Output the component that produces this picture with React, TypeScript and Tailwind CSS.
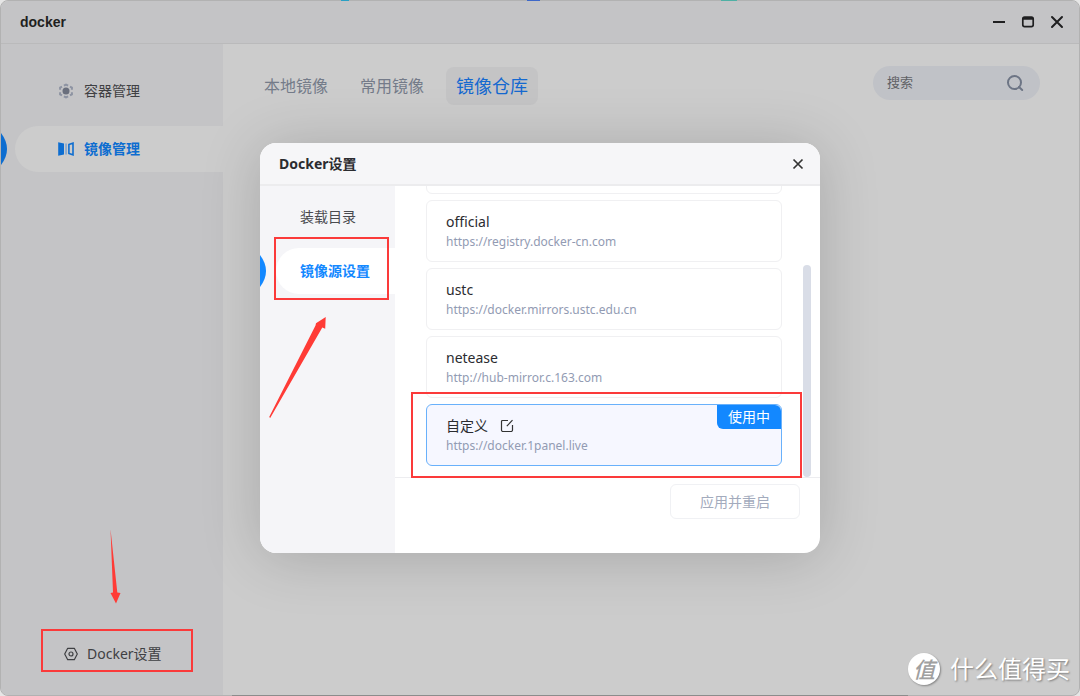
import React from "react";

type Mirror = { name: string; url: string; active?: boolean };

const mirrors: Mirror[] = [
  { name: "official", url: "https://registry.docker-cn.com" },
  { name: "ustc", url: "https://docker.mirrors.ustc.edu.cn" },
  { name: "netease", url: "http://hub-mirror.c.163.com" },
  { name: "自定义", url: "https://docker.1panel.live", active: true },
];

function ActiveMark({ className }: { className: string }) {
  return (
    <svg viewBox="0 0 6 32" className={`absolute left-0 h-8 w-1.5 ${className}`} aria-hidden="true">
      <path d="M0 0Q12 16 0 32Z" fill="currentColor" />
    </svg>
  );
}

function ContainerIcon() {
  return (
    <svg viewBox="0 0 16 16" className="size-4" fill="none" aria-hidden="true">
      <circle cx="8" cy="8" r="3.5" fill="#6a6f7d" />
      <path
        d="M5.9 2.7 8 1.6l2.1 1.1M12 3.6l1.900 1.100v2.100M13.900 9.200v2.100L12 12.400M10.100 13.300 8 14.400l-2.100-1.100M4 12.400l-1.900-1.100V9.200M2.100 6.800V4.700L4 3.600"
        stroke="#8d93a2"
        strokeWidth="2"
      />
    </svg>
  );
}

function ImageIcon() {
  return (
    <svg viewBox="0 0 16 16" className="size-4" fill="none" aria-hidden="true">
      <path d="M.2 1.200 6 2.600v10.800L.2 14.800Z" fill="#0d6dd0" />
      <path d="M7.300 2.400h1.500v11.200H7.300z" fill="#7da3cf" />
      <path d="M10.900 3.500 15 2.200v11.600l-4.100-1.300Z" stroke="#0d6dd0" strokeWidth="1.600" />
    </svg>
  );
}

function SettingsIcon() {
  return (
    <svg viewBox="0 0 16 16" className="size-4" fill="none" stroke="#3f4043" strokeWidth="1.200" aria-hidden="true">
      <path d="M4.700 2.300h6.600L14.300 8l-3 5.700H4.700L1.700 8Z" strokeLinejoin="round" />
      <circle cx="8" cy="8" r="2" />
    </svg>
  );
}

function MirrorCard({ name, url, active }: Mirror) {
  return (
    <li
      className={
        active
          ? "relative flex h-[62px] shrink-0 flex-col justify-center rounded-md border border-[#69b1fb] bg-[#f6f7ff] px-[19px] pt-0.5"
          : "relative flex h-[62px] shrink-0 flex-col justify-center rounded-md border border-[#f0f0f2] bg-white px-[19px] pt-0.5"
      }
    >
      <div className="flex items-center gap-3 text-sm leading-5 text-[#2b2c30]">
        {name}
        {active && (
          <button type="button" aria-label="编辑">
            <svg viewBox="0 0 14 14" className="size-3.5" fill="none" stroke="#333" strokeWidth="1.200" aria-hidden="true">
              <path d="M8 1.500H2.500a1 1 0 0 0-1 1v8.500A1.500 1.500 0 0 0 3 12.500h8a1.500 1.500 0 0 0 1.500-1.500V6M6.800 7.200l5.700-6" />
            </svg>
          </button>
        )}
      </div>
      <div className="text-xs leading-5 text-[#929bb3]">{url}</div>
      {active && (
        <span className="absolute top-0 right-0 flex h-6 w-16 items-center justify-center rounded-tr-md rounded-bl-md bg-[#1388ff] text-sm text-white">
          使用中
        </span>
      )}
    </li>
  );
}

function SettingsDialog() {
  return (
    <section
      role="dialog"
      aria-label="Docker设置"
      className="relative flex min-h-[410px] w-[560px] max-w-full flex-col rounded-2xl bg-white shadow-[0_4px_60px_rgba(0,0,0,0.18)]"
    >
      <header className="flex h-[43px] items-center justify-between rounded-t-2xl border-b-2 border-[#ececee] bg-[#f6f6f8] pr-4 pl-[19px]">
        <h2 className="text-sm font-bold text-[#2b2c30]">Docker设置</h2>
        <button type="button" aria-label="关闭">
          <svg viewBox="0 0 12 12" className="size-3" stroke="#333" strokeWidth="1.700" aria-hidden="true">
            <path d="M1.500 1.500l9 9M10.500 1.500l-9 9" />
          </svg>
        </button>
      </header>
      <div className="flex flex-1">
        <nav className="relative flex w-[135px] flex-col gap-2 rounded-bl-2xl bg-[#f5f5f8] pt-2 pl-4 text-sm">
          <button type="button" className="h-[46px] pl-6 text-left text-[#4a4b50]">
            装载目录
          </button>
          <button type="button" className="h-[46px] rounded-l-full bg-white pl-6 text-left font-bold text-[#1388ff]">
            镜像源设置
          </button>
          <ActiveMark className="top-[69px] text-[#1388ff]" />
        </nav>
        <div className="flex min-w-0 flex-1 flex-col">
          <div className="relative h-[292px] border-b border-[#ededf0]">
            <ul className="flex h-full flex-col justify-end gap-1.5 overflow-hidden pr-[38px] pb-[11px] pl-[31px]">
              <li className="h-[62px] shrink-0 rounded-md border border-[#f0f0f2]" />
              {mirrors.map((m) => (
                <MirrorCard key={m.name} {...m} />
              ))}
            </ul>
            <span className="absolute right-[9px] bottom-0 h-[212px] w-2 rounded-full bg-[#d9dde7]" />
          </div>
          <footer className="flex justify-end pt-1.5 pr-5">
            <button type="button" className="h-[35px] w-[130px] rounded-md border border-[#f0f1f4] text-sm text-[#a3abbd]">
              应用并重启
            </button>
          </footer>
        </div>
      </div>

      <div className="pointer-events-none absolute top-[94px] left-[14px] h-[63px] w-[115px] border-2 border-[#fb3a3a]" />
      <div className="pointer-events-none absolute top-[249px] left-[151px] h-[86px] w-[391px] border-2 border-[#fb3a3a]" />
      <svg viewBox="0 0 60 104" className="pointer-events-none absolute top-[173px] left-[8px] h-[104px] w-[60px]" aria-hidden="true">
        <path d="M1.200 101 47.500 9.500 48 7.200 57.700 1 57.200 12.800 54.300 11.500 2.200 102Z" fill="#ff3b36" />
      </svg>
    </section>
  );
}

export default function App() {
  return (
    <div className="relative flex h-screen flex-col overflow-hidden bg-[#e6e6e6] font-['Noto_Sans','Noto_Sans_CJK_SC',sans-serif]">
      <div className="flex flex-1 flex-col overflow-hidden rounded-lg border border-[#b2b2b2] bg-[#cccccc]">
        <header className="flex h-[43px] shrink-0 items-center justify-between border-b border-[#bababb] bg-[#c4c4c6] pr-[15px] pl-[19px]">
          <h1 className="font-['Liberation_Sans','Noto_Sans_CJK_SC',sans-serif] text-sm font-bold text-[#1f1f20]">docker</h1>
          <div className="flex gap-[15px]">
            <button type="button" aria-label="最小化">
              <svg viewBox="0 0 14 14" className="size-3.5" stroke="#1f1f20" strokeWidth="2" aria-hidden="true">
                <path d="M1 7h12" />
              </svg>
            </button>
            <button type="button" aria-label="最大化">
              <svg viewBox="0 0 14 14" className="size-3.5" fill="none" stroke="#1f1f20" aria-hidden="true">
                <rect x="1.800" y="2" width="10.400" height="9.600" rx="1.800" strokeWidth="1.700" />
                <path d="M2 3.400h10" strokeWidth="2.600" />
              </svg>
            </button>
            <button type="button" aria-label="关闭">
              <svg viewBox="0 0 14 14" className="size-3.5" stroke="#1f1f20" strokeWidth="2" strokeLinecap="round" aria-hidden="true">
                <path d="M2 2l10 10M12 2 2 12" />
              </svg>
            </button>
          </div>
        </header>

        <div className="flex min-h-0 flex-1">
          <aside className="relative flex w-[222px] shrink-0 flex-col bg-[#c4c4c6] pt-6 text-sm">
            <nav className="flex flex-col gap-3 pl-3.5">
              <button type="button" className="flex h-[46px] items-center gap-2.5 pl-[43px] text-[#3f4043]">
                <ContainerIcon />
                容器管理
              </button>
              <button
                type="button"
                className="flex h-[46px] items-center gap-2.5 rounded-l-full bg-[#cccccc] pl-[43px] font-bold text-[#0d6dd0]"
              >
                <ImageIcon />
                镜像管理
              </button>
            </nav>
            <ActiveMark className="top-[89px] text-[#0d6dd0]" />
            <div className="relative mt-auto mb-[23px] ml-10 flex h-[43px] w-[152px] items-center border-2 border-[#fb3a3a] pt-1.5 pl-5">
              <button type="button" className="flex items-center gap-2 text-[#3f4043]">
                <SettingsIcon />
                Docker设置
              </button>
              <svg viewBox="0 0 12 76" className="pointer-events-none absolute bottom-[66px] left-[66px] h-[76px] w-3" aria-hidden="true">
                <path d="M1.500 1 8.300 64.500 11.500 65 7 75.500 1.500 65 4 64.500Z" fill="#ff3b36" />
              </svg>
            </div>
          </aside>

          <main className="min-w-0 flex-1 pt-[22px] pr-[39px] pl-[31px]">
            <div className="flex items-start justify-between">
              <div className="flex items-center gap-3 pt-px">
                <button type="button" className="px-2.5 text-base text-[#747b89]">
                  本地镜像
                </button>
                <button type="button" className="px-2.5 text-base text-[#747b89]">
                  常用镜像
                </button>
                <button type="button" className="h-[38px] rounded-lg bg-[#c4c4c5] px-2.5 text-lg text-[#1569d0]">
                  镜像仓库
                </button>
              </div>
              <label className="flex h-[34px] w-[167px] items-center rounded-full bg-[#c0c2c7] pr-4 pl-3.5">
                <input
                  type="search"
                  aria-label="搜索"
                  placeholder="搜索"
                  className="min-w-0 flex-1 bg-transparent text-[13px] outline-none placeholder:text-[#606165]"
                />
                <svg viewBox="0 0 18 18" className="size-[18px]" fill="none" stroke="#6d7585" strokeWidth="2" aria-hidden="true">
                  <circle cx="8.500" cy="8.500" r="6.500" />
                  <path d="m13 13 3.200 3" strokeLinecap="round" />
                </svg>
              </label>
            </div>
          </main>
        </div>
      </div>

      <div className="absolute top-0 left-[341px] h-px w-2 bg-[#2aa0c4]" />
      <div className="absolute top-0 left-[527px] h-px w-[13px] bg-[#3e68c8]" />
      <div className="absolute top-0 left-[721px] h-px w-4 bg-[#4fb0a4]" />
      <div className="absolute bottom-0 left-[232px] h-px w-[676px] bg-[#8c8c8c]" />

      <div className="absolute inset-0 flex items-center justify-center">
        <SettingsDialog />
      </div>

      <div className="absolute right-2.5 bottom-[11px] flex items-center gap-2.5 text-white">
        <span className="flex size-8 items-center justify-center rounded-full bg-white text-[22px] font-medium text-[#a0a0a0] italic shadow-[1px_1px_2px_rgba(0,0,0,0.35)]">
          值
        </span>
        <span className="text-2xl [text-shadow:1px_1px_2px_rgba(0,0,0,0.4)]">什么值得买</span>
      </div>
    </div>
  );
}
